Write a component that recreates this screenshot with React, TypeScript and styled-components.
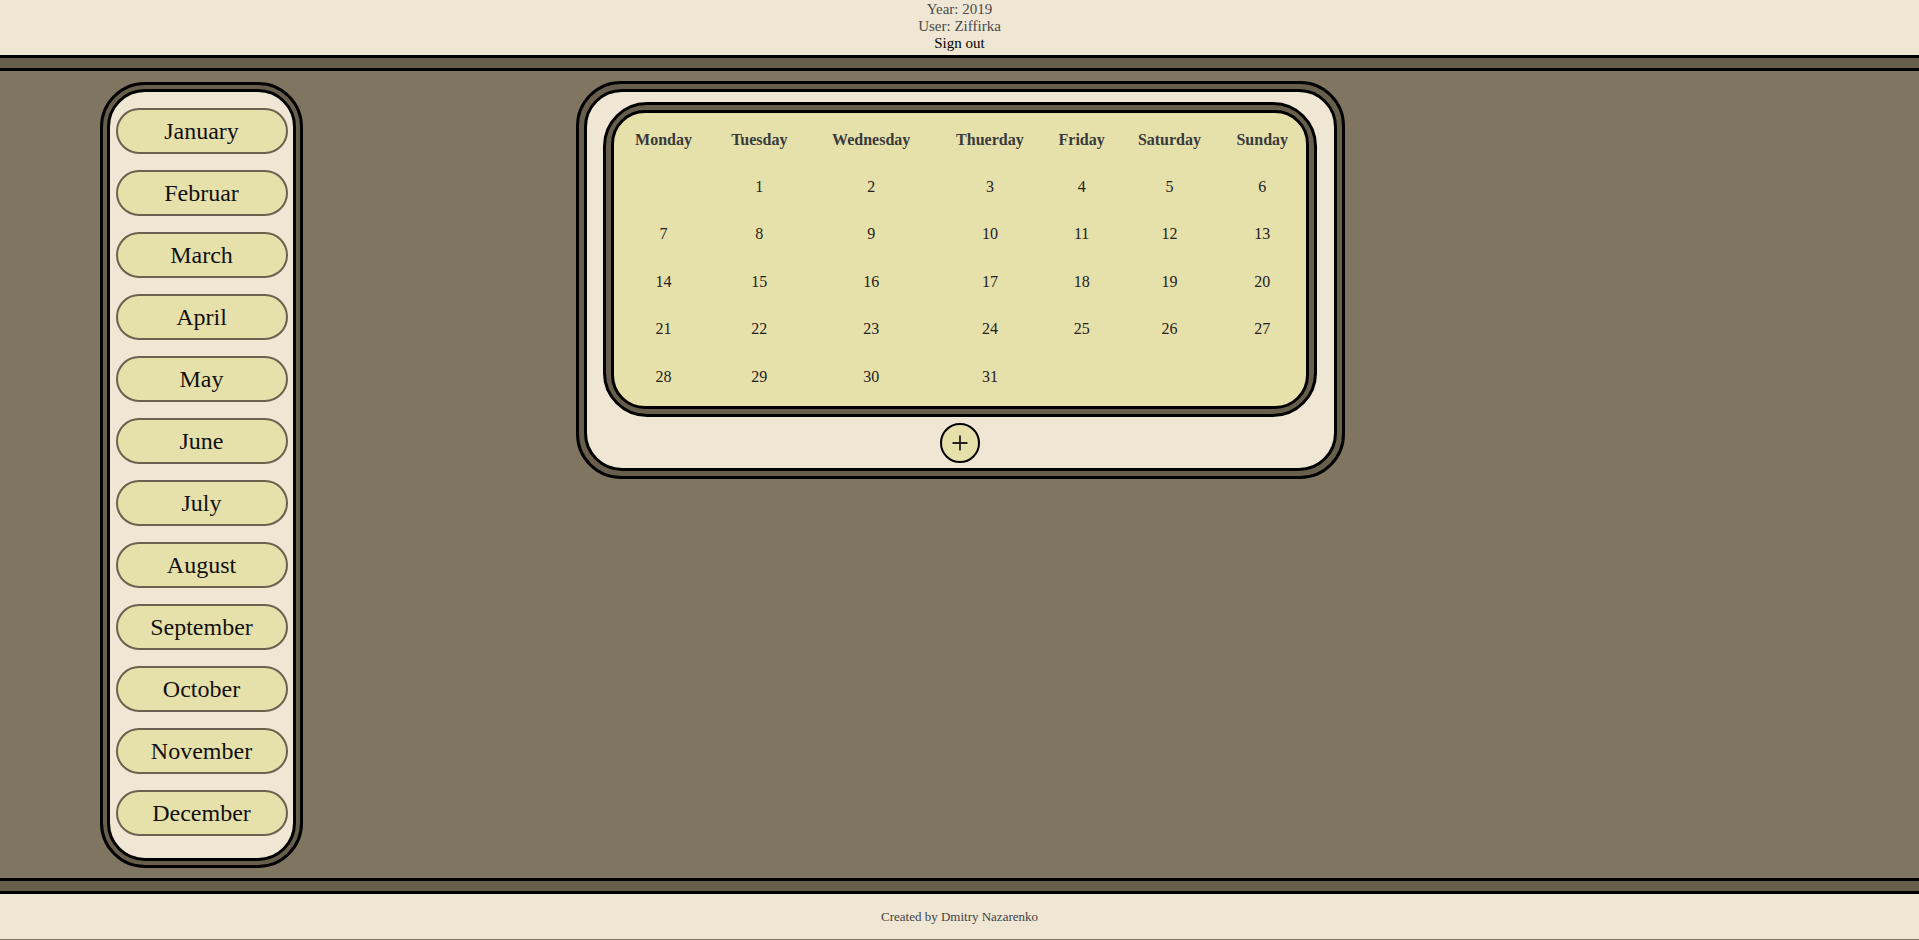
import React from "react";
import styled, { createGlobalStyle } from "styled-components";

const C = {
  cream: "#efe6d4",
  main: "#7f7561",
  band: "#675e4c",
  yellow: "#e6e0ab",
  btnBorder: "#6b614e",
  black: "#000",
};

const Global = createGlobalStyle`
  html, body { margin: 0; padding: 0; }
  body {
    background: ${C.main};
    font-family: "Liberation Serif", "Times New Roman", serif;
  }
  * { box-sizing: border-box; }
`;

const Page = styled.div`
  display: flex;
  flex-direction: column;
  min-height: 940px;
`;

const Header = styled.header`
  background: ${C.cream};
  height: 55px;
  padding-top: 0.5px;
  display: flex;
  flex-direction: column;
  align-items: center;
  font-size: 15px;
  line-height: 17px;
`;

const InfoLine = styled.div`
  color: #4a4a4a;
`;

const SignOut = styled.a`
  color: #000;
  cursor: pointer;
  text-decoration: none;
`;

const Band = styled.div`
  height: 16px;
  background: ${C.band};
  border-top: 3px solid ${C.black};
  border-bottom: 3px solid ${C.black};
`;

const Main = styled.main`
  flex: 1;
  display: grid;
  grid-template-columns: 576px 769px 1fr;
  align-items: start;
  padding: 10px 0 10px;
`;

const Frame = styled.div<{ $pad: number; $radius: number }>`
  border: 3px solid ${C.black};
  background: ${C.band};
  padding: ${(p) => p.$pad}px;
  border-radius: ${(p) => p.$radius}px;
  display: flex;
`;

const SideFrame = styled(Frame)`
  justify-self: start;
  align-self: stretch;
  margin-left: 100px;
  margin-top: 1px;
  width: 203px;
`;

const SideInner = styled.nav`
  flex: 1;
  border: 3px solid ${C.black};
  background: ${C.cream};
  border-radius: 38px;
  display: flex;
  flex-direction: column;
  align-items: center;
  gap: 16px;
  padding-top: 16px;
`;

const MonthButton = styled.button`
  width: 172px;
  height: 46px;
  flex: none;
  border: 2px solid ${C.btnBorder};
  border-radius: 23px;
  background: ${C.yellow};
  color: #111;
  font-family: "Liberation Serif", "Times New Roman", serif;
  font-size: 24px;
  padding: 0;
  cursor: pointer;
`;

const PanelFrame = styled(Frame)`
  grid-column: 2;
  width: 769px;
`;

const PanelInner = styled.section`
  flex: 1;
  border: 3px solid ${C.black};
  background: ${C.cream};
  border-radius: 38px;
  padding: 10px 17px 5px 16px;
  display: flex;
  flex-direction: column;
  align-items: center;
  gap: 6px;
`;

const CalFrame = styled(Frame)`
  align-self: stretch;
`;

const CalInner = styled.div`
  flex: 1;
  border: 3px solid ${C.black};
  background: ${C.yellow};
  border-radius: 34px;
  padding: 4px 0 5.5px;
`;

const Table = styled.table`
  width: 100%;
  table-layout: fixed;
  border-collapse: collapse;
  font-family: "Liberation Serif", "Times New Roman", serif;
  font-size: 16px;
`;

const Col = styled.col<{ $w?: number }>`
  width: ${(p) => (p.$w ? `${p.$w}px` : "auto")};
`;

const HeadCell = styled.th`
  height: 46px;
  padding: 0 0 1px;
  color: #383a3c;
  font-weight: bold;
  text-align: center;
  white-space: nowrap;
`;

const DayRow = styled.tr`
  height: 47.5px;
`;

const DayCell = styled.td`
  padding: 0;
  color: #222;
  text-align: center;
`;

const AddButton = styled.button`
  width: 40px;
  height: 40px;
  border-radius: 50%;
  border: 2.5px solid ${C.black};
  background: ${C.yellow};
  padding: 0;
  display: flex;
  align-items: center;
  justify-content: center;
  cursor: pointer;
`;

const Footer = styled.footer`
  background: ${C.cream};
  height: 46px;
  border-bottom: 1px solid ${C.main};
  display: flex;
  align-items: center;
  justify-content: center;
  font-size: 13px;
  color: #444;
`;

const months = [
  "January", "Februar", "March", "April", "May", "June",
  "July", "August", "September", "October", "November", "December",
];

const days = ["Monday", "Tuesday", "Wednesday", "Thuerday", "Friday", "Saturday", "Sunday"];
const colWidths = [99, 92.6, 131.2, 106.2, 77.4, 98.2, 0];

const weeks: (number | null)[][] = [
  [null, 1, 2, 3, 4, 5, 6],
  [7, 8, 9, 10, 11, 12, 13],
  [14, 15, 16, 17, 18, 19, 20],
  [21, 22, 23, 24, 25, 26, 27],
  [28, 29, 30, 31, null, null, null],
];

export default function App() {
  return (
    <Page>
      <Global />
      <Header>
        <InfoLine>Year: 2019</InfoLine>
        <InfoLine>User: Ziffirka</InfoLine>
        <SignOut>Sign out</SignOut>
      </Header>
      <Band />
      <Main>
        <SideFrame $pad={4} $radius={45}>
          <SideInner>
            {months.map((m) => (
              <MonthButton key={m}>{m}</MonthButton>
            ))}
          </SideInner>
        </SideFrame>
        <PanelFrame $pad={5} $radius={45}>
          <PanelInner>
            <CalFrame $pad={5} $radius={44}>
              <CalInner>
                <Table>
                  <colgroup>
                    {colWidths.map((w, i) => (
                      <Col key={i} $w={w || undefined} />
                    ))}
                  </colgroup>
                  <thead>
                    <tr>
                      {days.map((d) => (
                        <HeadCell key={d}>{d}</HeadCell>
                      ))}
                    </tr>
                  </thead>
                  <tbody>
                    {weeks.map((w, i) => (
                      <DayRow key={i}>
                        {w.map((n, j) => (
                          <DayCell key={j}>{n ?? ""}</DayCell>
                        ))}
                      </DayRow>
                    ))}
                  </tbody>
                </Table>
              </CalInner>
            </CalFrame>
            <AddButton aria-label="Add">
              <svg width="18" height="18" viewBox="0 0 18 18">
                <path d="M1.5 9 H16.5 M9 1.5 V16.5" stroke="#222" strokeWidth="1.8" fill="none" />
              </svg>
            </AddButton>
          </PanelInner>
        </PanelFrame>
      </Main>
      <Band />
      <Footer>Created by Dmitry Nazarenko</Footer>
    </Page>
  );
}
